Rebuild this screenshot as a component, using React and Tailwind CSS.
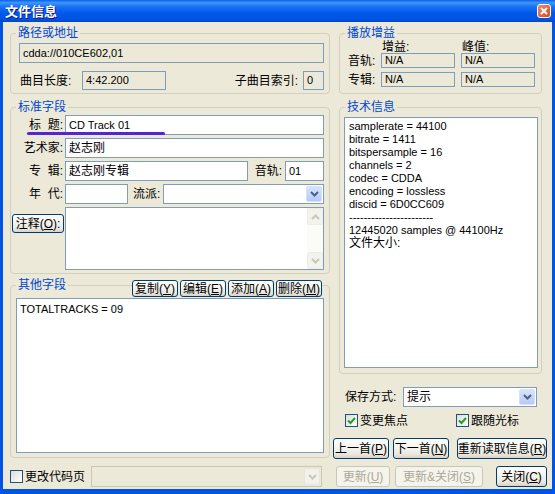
import React from "react";

const btn =
  "flex items-center justify-center whitespace-nowrap rounded-[3px] border border-[#003C74] bg-[linear-gradient(to_bottom,#FFFFFF_0%,#F6F5F0_40%,#E9E7DF_80%,#D8D3C8_100%)] text-[12px] leading-[12px] text-black";
const btnOff =
  "flex items-center justify-center whitespace-nowrap rounded-[3px] border border-[#C9C7BA] bg-[#F5F4EA] text-[12px] leading-[12px] text-[#ACA899]";

function Group({ title, className = "", children }) {
  return (
    <fieldset className={`border border-[#D0D0BF] rounded-[4px] ${className}`}>
      <legend className="ml-[5px] px-[2px] text-[12px] leading-[12px] text-[#0046D5]">
        {title}
      </legend>
      {children}
    </fieldset>
  );
}

function Field({ children, className = "", readOnly = false }) {
  return (
    <div
      className={`border border-[#7F9DB9] flex items-center pl-[3px] text-[11px] leading-[13px] whitespace-nowrap overflow-hidden ${
        readOnly ? "bg-[#ECE9D8]" : "bg-white"
      } ${className}`}
    >
      {children}
    </div>
  );
}

function Chevron({ up = false, color }) {
  return (
    <svg width="9" height="6" viewBox="0 0 9 6">
      <polyline
        points={up ? "1,5 4.5,1.5 8,5" : "1,1 4.5,4.5 8,1"}
        fill="none"
        stroke={color}
        strokeWidth="2"
      />
    </svg>
  );
}

function Combo({ value, className = "", disabled = false }) {
  return (
    <div
      className={`border p-[1px] flex ${
        disabled ? "border-[#C9C7BA] bg-[#ECE9D8]" : "border-[#7F9DB9] bg-white"
      } ${className}`}
    >
      <div className="flex-1 flex items-center pl-[2px] text-[12px] leading-[12px]">{value}</div>
      {disabled ? (
        <div className="w-[16px] rounded-[2px] bg-[#F2F1EA] border border-[#E8E6DC] flex items-center justify-center">
          <Chevron color="#C9C7BA" />
        </div>
      ) : (
        <div className="w-[16px] rounded-[2px] border border-[#D6E2FC] bg-[linear-gradient(to_bottom,#D7E3FD,#B6CAF7)] flex items-center justify-center">
          <Chevron color="#4D6185" />
        </div>
      )}
    </div>
  );
}

function Check({ checked = false }) {
  return (
    <span className="w-[13px] h-[13px] shrink-0 border border-[#1C5180] bg-[linear-gradient(135deg,#DCDCD7,#FFFFFF)] flex items-center justify-center">
      {checked && (
        <svg width="9" height="8" viewBox="0 0 9 8">
          <polyline points="1,3.5 3.5,6 8,1" fill="none" stroke="#21A121" strokeWidth="2" />
        </svg>
      )}
    </span>
  );
}

function Row({ label, children }) {
  return (
    <div className="flex items-center h-[20px]">
      <span className="w-[48px] mr-[2px] text-right whitespace-nowrap">{label}</span>
      {children}
    </div>
  );
}

const techLines = [
  "samplerate = 44100",
  "bitrate = 1411",
  "bitspersample = 16",
  "channels = 2",
  "codec = CDDA",
  "encoding = lossless",
  "discid = 6D0CC609",
  "-----------------------",
  "12445020 samples @ 44100Hz",
  "文件大小:",
];

export default function App() {
  return (
    <div className="w-[555px] h-[494px] flex flex-col bg-[#0054E3] font-['Liberation_Sans','Noto_Sans_CJK_SC',sans-serif] text-[12px] leading-[12px] text-black">
      {/* Title bar */}
      <div className="h-[22px] shrink-0 flex items-center justify-between pl-[5px] pr-[4px] bg-[linear-gradient(to_bottom,#0A5FE8_0%,#3D95FF_12%,#1A72F6_30%,#0058EA_60%,#0054E3_85%,#0046C8_100%)]">
        <span className="text-white font-bold text-[13px] leading-[13px] [text-shadow:1px_1px_#0F1089]">
          文件信息
        </span>
        <div className="w-[14px] h-[14px] rounded-[3px] border border-white bg-[linear-gradient(135deg,#F0896A,#D94A22)] flex items-center justify-center">
          <svg width="8" height="8" viewBox="0 0 8 8">
            <path d="M1 1 L7 7 M7 1 L1 7" stroke="white" strokeWidth="1.8" />
          </svg>
        </div>
      </div>

      {/* Client area */}
      <div className="flex-1 mx-[3px] mb-[5px] bg-[#ECE9D8] flex pl-[7px]">
        {/* Left column */}
        <div className="w-[320px] flex flex-col">
          <Group title="路径或地址" className="mt-[5px]">
            <div className="pt-[4px] pl-[8px] pr-[5px] pb-[3px]">
              <Field readOnly className="h-[20px]">cdda://010CE602,01</Field>
              <div className="mt-[8px] flex items-center h-[19px]">
                <span className="ml-[1px] w-[62px] whitespace-nowrap">曲目长度:</span>
                <Field readOnly className="h-[19px] w-[84px]">4:42.200</Field>
                <span className="ml-auto mr-[5px] whitespace-nowrap">子曲目索引:</span>
                <Field readOnly className="h-[19px] w-[21px]">0</Field>
              </div>
            </div>
          </Group>

          <Group title="标准字段" className="mt-[7px]">
            <div className="relative pt-[2px] pl-[4px] pr-[5px] pb-[3px] flex flex-col gap-[3px]">
              <Row label={"标\u00A0\u00A0题:"}>
                <Field className="h-[20px] flex-1">CD Track 01</Field>
              </Row>
              <Row label="艺术家:">
                <Field className="h-[20px] flex-1 text-[12px]">赵志刚</Field>
              </Row>
              <Row label={"专\u00A0\u00A0辑:"}>
                <Field className="h-[20px] w-[183px] text-[12px]">赵志刚专辑</Field>
                <span className="flex-1 text-right pr-[3px] whitespace-nowrap">音轨:</span>
                <Field className="h-[20px] w-[39px]">01</Field>
              </Row>
              <Row label={"年\u00A0\u00A0代:"}>
                <Field className="h-[20px] w-[63px]" />
                <span className="ml-[5px] w-[30px] whitespace-nowrap">流派:</span>
                <Combo className="h-[20px] flex-1" value="" />
              </Row>
              <div className="flex items-start h-[63px]">
                <div className={`${btn} -ml-[3px] mt-[7px] w-[52px] h-[19px]`}>
                  注释(<u>O</u>):
                </div>
                <div className="ml-[1px] flex-1 h-full border border-[#7F9DB9] bg-white flex justify-end">
                  <div className="w-[16px] flex flex-col bg-[#FBFBF8]">
                    <div className="h-[17px] rounded-[2px] border border-[#EEEDE5] bg-[#F3F2EC] flex items-center justify-center">
                      <Chevron up color="#C9C7BA" />
                    </div>
                    <div className="flex-1" />
                    <div className="h-[17px] rounded-[2px] border border-[#EEEDE5] bg-[#F3F2EC] flex items-center justify-center">
                      <Chevron color="#C9C7BA" />
                    </div>
                  </div>
                </div>
              </div>
              {/* annotation underline */}
              <div className="absolute left-[16px] top-[19px] w-[138px] h-[3px] rounded-full bg-[#5226D6]" />
            </div>
          </Group>

          <fieldset className="mt-[5px] border border-[#D0D0BF] rounded-[4px]">
            <legend className="ml-[5px] pl-[2px] w-[306px] h-[12px] flex items-start text-[12px] leading-[12px]">
              <span className="text-[#0046D5] whitespace-nowrap">其他字段</span>
              <span className="flex-1 h-px mt-[6px] ml-[2px] bg-[#D0D0BF]" />
              <div className="flex gap-[2px] mt-[1px]">
                <div className={`${btn} w-[46px] h-[17px]`}>复制(<u>Y</u>)</div>
                <div className={`${btn} w-[46px] h-[17px]`}>编辑(<u>E</u>)</div>
                <div className={`${btn} w-[46px] h-[17px]`}>添加(<u>A</u>)</div>
                <div className={`${btn} w-[46px] h-[17px]`}>删除(<u>M</u>)</div>
              </div>
            </legend>
            <div className="pt-[7px] px-[5px] pb-[4px]">
              <div className="h-[155px] border border-[#7F9DB9] bg-white pl-[3px] pt-[4px] text-[11px] leading-[13px]">
                TOTALTRACKS = 09
              </div>
            </div>
          </fieldset>

          <div className="mt-[8px] h-[21px] flex items-center">
            <Check />
            <span className="ml-[2px] whitespace-nowrap">更改代码页</span>
            <Combo disabled className="ml-[6px] w-[231px] h-[21px]" value="" />
          </div>
        </div>

        {/* Right column */}
        <div className="w-[214px] ml-[3px] flex flex-col">
          <Group title="播放增益" className="mt-[5px] ml-[6px] w-[203px]">
            <div className="pl-[8px] pt-[2px] pb-[6px]">
              <div className="flex h-[12px]">
                <span className="ml-[34px] w-[80px]">增益:</span>
                <span>峰值:</span>
              </div>
              <div className="flex items-center h-[15px]">
                <span className="w-[33px]">音轨:</span>
                <Field readOnly className="h-[15px] w-[74px]">N/A</Field>
                <Field readOnly className="h-[15px] w-[74px] ml-[6px]">N/A</Field>
              </div>
              <div className="mt-[4px] flex items-center h-[15px]">
                <span className="w-[33px]">专辑:</span>
                <Field readOnly className="h-[15px] w-[74px]">N/A</Field>
                <Field readOnly className="h-[15px] w-[74px] ml-[6px]">N/A</Field>
              </div>
            </div>
          </Group>

          <Group title="技术信息" className="mt-[7px] ml-[6px] w-[203px]">
            <div className="pt-[4px] pl-[4px] pr-[3px] pb-[5px]">
              <div className="h-[251px] border border-[#7F9DB9] bg-white pl-[4px] pt-[2px] text-[11px] leading-[13px]">
                {techLines.map((line, i) => (
                  <div key={i} className={`whitespace-nowrap ${i === 9 ? "text-[12px]" : ""}`}>
                    {line}
                  </div>
                ))}
              </div>
            </div>
          </Group>

          <div className="mt-[13px] h-[20px] flex items-center pl-[12px]">
            <span className="w-[58px] whitespace-nowrap">保存方式:</span>
            <Combo className="w-[134px] h-[20px]" value="提示" />
          </div>

          <div className="mt-[7px] h-[13px] flex items-center pl-[12px]">
            <div className="w-[111px] flex items-center">
              <Check checked />
              <span className="ml-[2px] whitespace-nowrap">变更焦点</span>
            </div>
            <Check checked />
            <span className="ml-[2px] whitespace-nowrap">跟随光标</span>
          </div>

          <div className="mt-[11px] flex">
            <div className={`${btn} w-[56px] h-[21px]`}>上一首(<u>P</u>)</div>
            <div className={`${btn} w-[56px] h-[21px] ml-[4px]`}>下一首(<u>N</u>)</div>
            <div className={`${btn} w-[90px] h-[21px] ml-[8px]`}>重新读取信息(<u>R</u>)</div>
          </div>

          <div className="mt-[7px] flex">
            <div className={`${btnOff} w-[54px] h-[21px] ml-[3px]`}>更新(<u>U</u>)</div>
            <div className={`${btnOff} w-[88px] h-[21px] ml-[5px]`}>更新&amp;关闭(<u>S</u>)</div>
            <div className={`${btn} w-[51px] h-[21px] ml-[13px]`}>关闭(<u>C</u>)</div>
          </div>
        </div>
      </div>
    </div>
  );
}
